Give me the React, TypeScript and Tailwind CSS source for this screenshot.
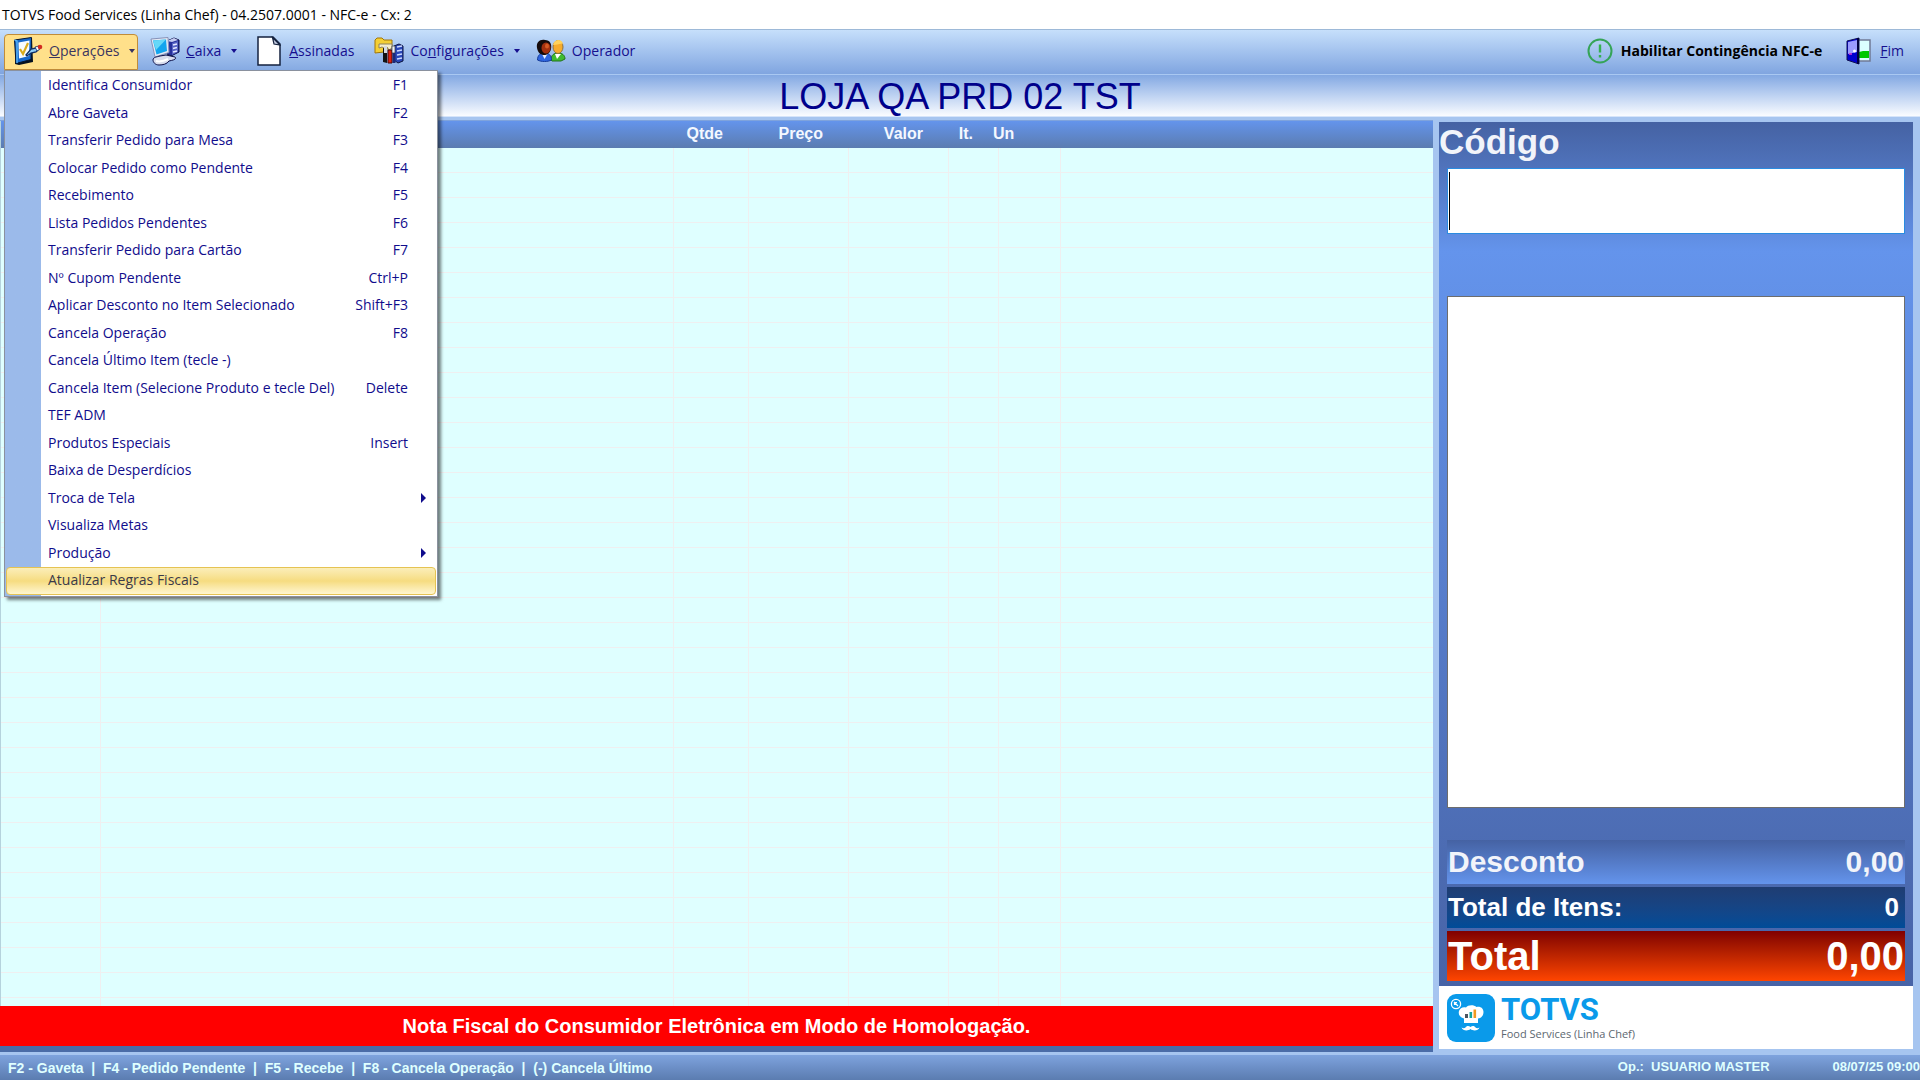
import { useState } from "react";
import { clsx } from "clsx";

interface MenuEntry {
  label: string;
  shortcut?: string;
  submenu?: boolean;
}

const operationsMenu: MenuEntry[] = [
  { label: "Identifica Consumidor", shortcut: "F1" },
  { label: "Abre Gaveta", shortcut: "F2" },
  { label: "Transferir Pedido para Mesa", shortcut: "F3" },
  { label: "Colocar Pedido como Pendente", shortcut: "F4" },
  { label: "Recebimento", shortcut: "F5" },
  { label: "Lista Pedidos Pendentes", shortcut: "F6" },
  { label: "Transferir Pedido para Cartão", shortcut: "F7" },
  { label: "Nº Cupom Pendente", shortcut: "Ctrl+P" },
  { label: "Aplicar Desconto no Item Selecionado", shortcut: "Shift+F3" },
  { label: "Cancela Operação", shortcut: "F8" },
  { label: "Cancela Último Item (tecle -)" },
  { label: "Cancela Item (Selecione Produto e tecle Del)", shortcut: "Delete" },
  { label: "TEF ADM" },
  { label: "Produtos Especiais", shortcut: "Insert" },
  { label: "Baixa de Desperdícios" },
  { label: "Troca de Tela", submenu: true },
  { label: "Visualiza Metas" },
  { label: "Produção", submenu: true },
  { label: "Atualizar Regras Fiscais" },
];

const columns = [
  { title: "", width: "w-[100px]", align: "text-left" },
  { title: "", width: "w-[573px]", align: "text-left" },
  { title: "Qtde", width: "w-[75px]", align: "text-right pr-[26px]" },
  { title: "Preço", width: "w-[100px]", align: "text-right pr-[26px]" },
  { title: "Valor", width: "w-[100px]", align: "text-right pr-[26px]" },
  { title: "It.", width: "w-[50px]", align: "text-right pr-[26px]" },
  { title: "Un", width: "w-[62px]", align: "text-left -indent-1.5" },
  { title: "", width: "", align: "text-left" },
];

const emptyRows = Array.from({ length: 35 }, (_, i) => i);

function ChecklistIcon() {
  return (
    <svg className="shrink-0" width="30" height="30" viewBox="0 0 30 30" aria-hidden="true">
      <path d="M3 4 19 2l1 24-14 3-4-1Z" fill="#04101f" />
      <path d="M1.500 4 18.500 1.500 18 23.500 3 27.500Z" fill="#1668cc" stroke="#06152e" />
      <path d="m1.500 4 2.500 1v22" fill="none" stroke="#5cb4f4" strokeWidth="1.400" />
      <path d="m5.500 6.500 11-2-.500 15.500-10 2.500Z" fill="#f8fcff" />
      <path d="m7 13 3 5 5-11" fill="none" stroke="#d9ab1c" strokeWidth="2.200" />
      <path d="m13 19 5-6 5-1 3 1-3 3-5 1-4 3Z" fill="#8ecbf5" stroke="#0d2c63" strokeWidth="1.300" />
      <path d="m22 11 4-1 1 3-3 2Z" fill="#fff" stroke="#0d2c63" strokeWidth=".800" />
      <circle cx="27" cy="11" r="2.300" fill="#d22b22" />
    </svg>
  );
}

function ComputerIcon() {
  return (
    <svg className="shrink-0" width="30" height="30" viewBox="0 0 30 30" aria-hidden="true">
      <path d="m17 5 7-3 5 2v12l-8 4-4-2Z" fill="#26309a" stroke="#0c1048" />
      <path d="m17 5 7-3 4 2-6 2Z" fill="#c6cdf2" />
      <path d="m22 7 6-2v11l-6 3Z" fill="#5562c4" />
      <path d="m23 9 4-1M23 12.500l4-1M23 16l4-1" stroke="#e4e8ff" strokeWidth="1.500" />
      <path d="m1 3 17-1.500 1 15-14 4.500Z" fill="#e3e8f4" stroke="#8792b8" />
      <path d="M3 4.500 16 3.500l1 11.500-10.500 3.500Z" fill="#12a5ee" />
      <path d="M3 4.500 16 3.500 6 14Z" fill="#66d8f8" />
      <path d="M3 24c0-3 4-3 7-4l6-1 9 2c2 2-1 3-6 4-2 3-6 4-10 4-4 0-6-3-6-5Z" fill="#d9dded" stroke="#0c1048" />
      <path d="M6 25c4 1 8 0 12-2" fill="none" stroke="#fff" strokeWidth="2" />
    </svg>
  );
}

function PageIcon() {
  return (
    <svg className="shrink-0" width="24" height="30" viewBox="0 0 24 30" aria-hidden="true">
      <path d="M1 1h15l7 7v21H1Z" fill="#fff" stroke="#15223f" strokeWidth="1.500" />
      <path d="M15.500 1.500 17 8l6 1Z" fill="#c5cee2" stroke="#15223f" strokeWidth="1.200" />
    </svg>
  );
}

function SettingsIcon() {
  return (
    <svg className="shrink-0" width="30" height="28" viewBox="0 0 30 28" aria-hidden="true">
      <path d="M1 3 3 1h5l2 2h8v5l-8 7-9 1Z" fill="#f4cf35" stroke="#a27708" />
      <path d="M5 7h13v4l-3 2-2-3-3 1-2-1-3 1Z" fill="#f7eeca" stroke="#8d8160" />
      <path d="m20 9 5-2 4 2v15l-5 2-4-3Z" fill="#2947b8" stroke="#0c1440" />
      <path d="m23 10 5-1M23 14l5-1M23 18l5-1M23 22l5-1" stroke="#cbd8ff" strokeWidth="1.600" />
      <path d="M9 11v14l4 1V12Z" fill="#121212" />
      <path d="M10 9h3v7h-3Z" fill="#d7dbe2" />
      <path d="M14 13h4v13h-4Z" fill="#df2211" stroke="#4e0803" />
      <path d="M18 9h3v7h-3Z" fill="#eef1f7" stroke="#333" strokeWidth=".700" />
      <path d="M18.500 16h3v10h-3Z" fill="#1c2a79" />
    </svg>
  );
}

function PeopleIcon() {
  return (
    <svg className="shrink-0" width="30" height="24" viewBox="0 0 30 24" aria-hidden="true">
      <path d="M15 21c0-5 3-7 7-7s7 2 7 6l-4 2H16Z" fill="#3fbb31" stroke="#23751b" />
      <path d="m19 15 2 5 4-5Z" fill="#fff" />
      <ellipse cx="22" cy="8" rx="5" ry="6.500" fill="#f6ac2c" stroke="#8f7140" />
      <path d="M17 6c1-6 9-7 10-1-3-1-6 1-10 1Z" fill="#ffd25b" />
      <path d="M1.500 21c0-5 3-7 7-7s7 2 7 7c-4 2-10 2-14 0Z" fill="#2f66e0" stroke="#163c9a" />
      <path d="m6 15 2.500 5 3-5Z" fill="#e6efff" />
      <path d="M1 9C0 3 4 0 9 1c5 0 7 4 6 9-1 4-4 6-7 6S2 14 1 9Z" fill="#160b0b" />
      <ellipse cx="10" cy="9" rx="4.500" ry="5.500" fill="#a3300f" />
      <ellipse cx="11" cy="7" rx="2" ry="2.500" fill="#d65a25" />
    </svg>
  );
}

function AlertIcon() {
  return (
    <svg className="shrink-0" width="26" height="26" viewBox="0 0 26 26" aria-hidden="true">
      <circle cx="13" cy="13" r="11.500" fill="none" stroke="#35a457" strokeWidth="2" />
      <path d="M13 6.500v8M13 17v2.500" stroke="#35b04f" strokeWidth="2.400" />
    </svg>
  );
}

function ExitIcon() {
  return (
    <svg className="shrink-0" width="26" height="28" viewBox="0 0 26 28" aria-hidden="true">
      <path d="M12 3h12v21H12Z" fill="#dcffff" stroke="#707a95" strokeWidth="1.500" />
      <path d="M13 15l4-1h6v7H13Z" fill="#00c800" />
      <path d="M1 4 13 1v26L1 23Z" fill="#0000cd" stroke="#101050" />
      <path d="M2 5 11 3v12l-9 2Z" fill="#9a9aff" />
      <path d="M12 1v26" stroke="#000040" strokeWidth="2" />
      <circle cx="8.500" cy="14" r="1.500" fill="#fff" />
      <path d="M3 17h3" stroke="#d63bd6" strokeWidth="1.500" />
    </svg>
  );
}

function Caret() {
  return (
    <span className="ml-1 h-0 w-0 border-x-3 border-t-4 border-x-transparent border-t-current" />
  );
}

function ChefLogo() {
  return (
    <svg className="shrink-0" width="48" height="48" viewBox="0 0 48 48" aria-hidden="true">
      <rect width="48" height="48" rx="9" fill="#0a9aea" />
      <circle cx="9" cy="10" r="4.600" fill="none" stroke="#fff" strokeWidth="1.300" />
      <path d="m7 8 4 4M7.500 11V8.500H10" fill="none" stroke="#fff" strokeWidth="1.200" />
      <path
        d="M17 29v-4.500c-4-1-6-4-5-7.500 1-3 4-4.500 7-3.500 2-3 8-3 10.500-.500 4-1 7 1.500 7 5 0 3.500-2 6-5.500 6.500V29Z"
        fill="#fff"
      />
      <path d="M18 20h3v4h-3Z" fill="#4b5560" />
      <path d="M22.500 18h2.600v6h-2.600Z" fill="#12a6a0" />
      <path d="M26.500 15.500h2.600V24h-2.600Z" fill="#f39a1e" />
      <path
        d="M23.500 33c-2-1.500-4-1-5 .500-1 1-2.500 1-4 0 1 3 6 4 9 1.500 3 2.500 8 1.500 9-1.500-1.500 1-3 1-4 0-1-1.500-3-2-5-.500Z"
        fill="#fff"
      />
    </svg>
  );
}

function OperationsMenu() {
  return (
    <ul
      role="menu"
      className="absolute top-full left-0 z-20 w-[434px] border border-[#8a919e] bg-white bg-linear-to-r from-[#9bbaea] from-[36px] to-white to-[36px] p-px text-[#100c8c] shadow-[3px_3px_3px_#00000080]"
    >
      {operationsMenu.map((item, index) => (
        <li key={item.label} role="none" className="odd:h-7 even:h-[27px]">
          <button
            role="menuitem"
            className={clsx(
              "flex h-full w-full items-center justify-between border pr-[27px] pb-0.5 pl-[41px] whitespace-nowrap",
              index === operationsMenu.length - 1
                ? "rounded-sm border-[#e5c353] bg-linear-to-b from-[#fbeeb9] via-[#f6dc80] to-[#fff6cf] text-[#3a3a4a]"
                : "border-transparent",
            )}
          >
            {item.label}
            {item.shortcut && <span>{item.shortcut}</span>}
            {item.submenu && (
              <span className="-mr-[18px] h-0 w-0 border-y-5 border-l-5 border-y-transparent border-l-current" />
            )}
          </button>
        </li>
      ))}
    </ul>
  );
}

function Toolbar() {
  const [open, setOpen] = useState(true);

  return (
    <nav className="flex h-[46px] shrink-0 items-center justify-between border-y border-t-[#9db9d8] border-b-[#a9c8f2] bg-linear-to-b from-[#c6dffb] to-[#80a5e0] pr-4 pl-1 text-sm text-[#160f8f]">
      <div className="flex items-center">
        <div className="relative">
          <button
            onClick={() => setOpen(!open)}
            className="flex h-9 w-[134px] items-center gap-1.5 rounded-t-sm border border-[#c08c3a] bg-[#ffe08a] pb-0.5 pl-2 text-[#3a3560]"
          >
            <ChecklistIcon />
            <span>
              <u>O</u>perações
            </span>
            <Caret />
          </button>
          {open && <OperationsMenu />}
        </div>
        <button className="ml-3 flex items-center gap-1.5 pb-0.5">
          <ComputerIcon />
          <span>
            <u>C</u>aixa
          </span>
          <Caret />
        </button>
        <button className="ml-5 flex items-center gap-2 pb-0.5">
          <PageIcon />
          <span>
            <u>A</u>ssinadas
          </span>
        </button>
        <button className="ml-5 flex items-center gap-1.5 pb-0.5">
          <SettingsIcon />
          <span>
            Co<u>n</u>figurações
          </span>
          <Caret />
        </button>
        <button className="ml-4 flex items-center gap-1.5 pb-0.5">
          <PeopleIcon />
          <span>Operador</span>
        </button>
      </div>
      <div className="flex items-center gap-6">
        <button className="flex items-center gap-2 pb-0.5 font-bold text-black">
          <AlertIcon />
          Habilitar Contingência NFC-e
        </button>
        <button className="flex items-center gap-2 pb-0.5">
          <ExitIcon />
          <span>
            <u>F</u>im
          </span>
        </button>
      </div>
    </nav>
  );
}

function ItemsTable() {
  return (
    <section className="flex min-w-0 flex-1 flex-col border-t border-[#7fa3dc] bg-[#4a6ca8] font-['Liberation_Sans',Arial,sans-serif]">
      <div className="min-h-0 flex-1 overflow-hidden border-l border-[#b5d3dd] bg-[#dfffff]">
        <table className="w-full table-fixed border-separate border-spacing-0">
          <thead>
            <tr className="h-[27px] bg-linear-to-b from-[#6494ec] to-[#5b7cb0] text-base text-[#f4f8ff]">
              {columns.map((column, index) => (
                <th key={index} className={clsx("pb-0.5 leading-5", column.width, column.align)}>
                  {column.title}
                </th>
              ))}
            </tr>
          </thead>
          <tbody>
            {emptyRows.map((row) => (
              <tr key={row} className="h-[25px]">
                {columns.map((_, index) => (
                  <td
                    key={index}
                    className="border-r border-b border-[#efeff0] p-0 last:border-r-0"
                  />
                ))}
              </tr>
            ))}
          </tbody>
        </table>
      </div>
      <p className="mb-1.5 bg-[#ff0000] text-center text-xl leading-10 font-bold text-white">
        Nota Fiscal do Consumidor Eletrônica em Modo de Homologação.
      </p>
    </section>
  );
}

function SalePanel() {
  return (
    <aside className="flex w-[474px] shrink-0 flex-col pt-0.5 font-['Liberation_Sans',Arial,sans-serif] font-bold text-[#f2f4fa]">
      <div className="flex flex-1 flex-col bg-linear-to-b from-[#4562a3] via-[#6494ec] via-15% to-[#4763a6] px-2 pb-[5px]">
        <label htmlFor="codigo" className="-ml-2 text-[35px] leading-10">
          Código
        </label>
        <div className="relative mt-1.5 h-[66px]">
          <input
            id="codigo"
            type="text"
            className="h-full w-full border border-[#2a8be0] bg-white px-1 text-4xl text-black outline-none"
          />
          <span className="absolute top-1 left-0.5 h-[58px] w-px bg-black" />
        </div>
        <div className="mt-[62px] mb-8 min-h-0 flex-1 border border-[#6d6d6d] bg-white" />
        <div className="flex flex-col gap-[3px]">
          <div className="flex h-11 items-center justify-between bg-linear-to-b from-[#4562a3] to-[#6494ec] px-px text-3xl">
            <span>Desconto</span>
            <span>0,00</span>
          </div>
          <div className="flex h-[41px] items-center justify-between bg-linear-to-b from-[#1f3d72] to-[#004c98] pr-1.5 pl-px text-[26px] text-white">
            <span>Total de Itens:</span>
            <span>0</span>
          </div>
          <div className="flex h-[50px] items-center justify-between bg-linear-to-b from-[#800000] to-[#ff4500] px-px text-[40px] text-white">
            <span>Total</span>
            <span>0,00</span>
          </div>
        </div>
      </div>
      <div className="mb-[3px] flex h-[63px] items-center gap-1.5 bg-white pl-2">
        <ChefLogo />
        <div className="font-['Open_Sans','Noto_Sans',sans-serif]">
          <p className="font-['Roboto',sans-serif] text-[31px] leading-8 font-bold text-[#0a9aea]">
            TOTVS
          </p>
          <p className="text-[11px] leading-4 font-normal text-[#5c6770]">
            Food Services (Linha Chef)
          </p>
        </div>
      </div>
    </aside>
  );
}

export default function App() {
  return (
    <div className="flex h-screen flex-col overflow-hidden bg-[#a6c5f0] font-['Open_Sans','Noto_Sans',sans-serif]">
      <header className="h-[29px] shrink-0 bg-white pl-0.5 text-sm leading-[29px] text-black">
        TOTVS Food Services (Linha Chef) - 04.2507.0001 - NFC-e - Cx: 2
      </header>
      <Toolbar />
      <h1 className="h-[42px] shrink-0 border-b border-[#d5e4fa] bg-linear-to-b from-[#83a8e2] to-[#fafcff] text-center font-['Liberation_Sans',Arial,sans-serif] text-4xl leading-[43px] text-[#00008b]">
        LOJA QA PRD 02 TST
      </h1>
      <main className="flex min-h-0 flex-1 gap-1.5 pt-[3px] pr-[7px]">
        <ItemsTable />
        <SalePanel />
      </main>
      <footer className="mt-[3px] flex h-[25px] shrink-0 items-center justify-between bg-linear-to-b from-[#7ea3de] to-[#5b7cb0] pl-2 font-['Liberation_Sans',Arial,sans-serif] text-sm font-bold whitespace-pre text-[#dfffff]">
        <span>
          {"F2 - Gaveta  |  F4 - Pedido Pendente  |  F5 - Recebe  |  F8 - Cancela Operação  |  (-) Cancela Último"}
        </span>
        <span className="flex gap-[63px] text-[13px]">
          <span>{"Op.:  USUARIO MASTER"}</span>
          <span>08/07/25 09:00</span>
        </span>
      </footer>
    </div>
  );
}
